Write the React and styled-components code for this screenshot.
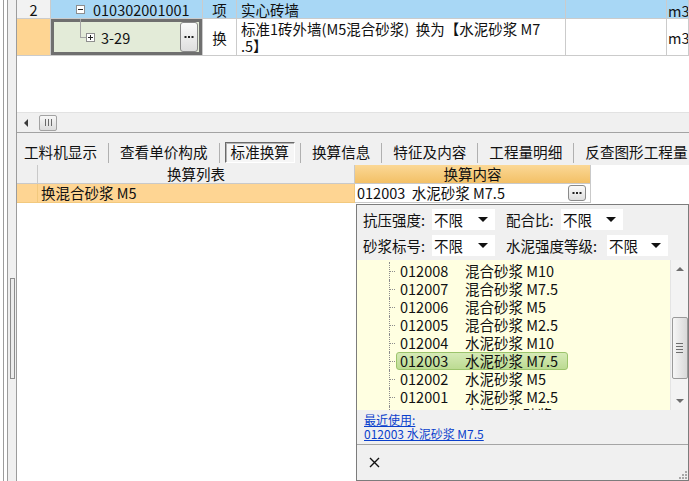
import React from 'react';
import styled, { createGlobalStyle } from 'styled-components';

const GlobalStyle = createGlobalStyle`
  html, body {
    margin: 0;
    padding: 0;
    background: #fff;
  }
  body {
    font-family: "Noto Sans CJK SC", "Liberation Sans", sans-serif;
    font-size: 14.5px;
    color: #111;
    overflow: hidden;
  }
`;

const Screen = styled.div`
  position: relative;
  width: 689px;
  height: 481px;
  display: flex;
  overflow: hidden;
  background: #fff;
`;

const Gutter = styled.div`
  width: 16px;
  flex: none;
  display: flex;
  flex-direction: column;
  padding-top: 278px;
  box-sizing: border-box;
  background: linear-gradient(
    to right,
    #fff 0 3px,
    #9c9c9c 3px 4px,
    #fff 4px 7px,
    #9c9c9c 7px 8px,
    #f0f0f0 8px 16px
  );
`;

const SplitGrip = styled.div`
  width: 5px;
  height: 101px;
  margin-left: 10px;
  box-sizing: border-box;
  border: 1px solid #8c8c8c;
  background: #ececec;
`;

const Main = styled.div`
  flex: 1;
  min-width: 0;
  display: flex;
  flex-direction: column;
  border-left: 1px solid #9c9c9c;
  background: #f0f0f0;
`;

/* ---------- top grid ---------- */

const TopGrid = styled.div`
  height: 133px;
  flex: none;
  box-sizing: border-box;
  display: flex;
  flex-direction: column;
  background: #fff;
  border-bottom: 1px solid #a3a3a3;
`;

const Row = styled.div`
  display: grid;
  grid-template-columns: 34px 152px 34px 329px 101px 1fr;
  height: ${(p) => p.$h}px;
  flex: none;
`;

const Cell = styled.div`
  box-sizing: border-box;
  border-right: 1px solid #cbcbcb;
  border-bottom: 1px solid #cbcbcb;
  background: ${(p) => p.$bg || '#fff'};
  display: flex;
  align-items: ${(p) => (p.$top ? 'flex-start' : 'center')};
  justify-content: ${(p) => (p.$center ? 'center' : 'flex-start')};
  padding-left: ${(p) => p.$pl || 0}px;
  padding-top: ${(p) => p.$pt || 0}px;
  line-height: 17px;
  white-space: pre;
  overflow: hidden;
  min-width: 0;
`;

const EditCell = styled(Cell)`
  background: #e3ebd8;
  box-shadow: inset 0 0 0 3px #6f6f6f;
  align-items: center;
`;

const TreeBox = styled.span`
  width: 9px;
  height: 9px;
  flex: none;
  box-sizing: border-box;
  border: 1px solid #8e8e8e;
  background: #fff;
  margin-right: ${(p) => p.$gap}px;
  position: relative;
  display: flex;
  align-items: center;
  justify-content: center;

  &::before,
  &::after {
    content: '';
    position: absolute;
    background: #222;
  }
  &::before {
    width: 5px;
    height: 1px;
  }
  &::after {
    width: 1px;
    height: 5px;
    display: ${(p) => (p.$plus ? 'block' : 'none')};
  }
`;

const Elbow = styled.span`
  width: 6px;
  height: 19px;
  flex: none;
  align-self: flex-start;
  margin-left: 29px;
  box-sizing: border-box;
  border-left: 1px solid #a4a4a4;
  border-bottom: 1px solid #a4a4a4;
`;

const DotsButton = styled.span`
  margin-left: auto;
  margin-right: 4px;
  width: 18px;
  height: ${(p) => p.$h}px;
  flex: none;
  box-sizing: border-box;
  border: 1px solid #8a8a8a;
  border-radius: 3px;
  background: linear-gradient(#fbfbfb, #dedede);
  display: flex;
  align-items: center;
  justify-content: center;
`;

const Dots = () => (
  <svg width="10" height="4" viewBox="0 0 10 4">
    <rect x="0.5" y="1" width="2" height="2" fill="#222" />
    <rect x="4" y="1" width="2" height="2" fill="#222" />
    <rect x="7.5" y="1" width="2" height="2" fill="#222" />
  </svg>
);

const GridFill = styled.div`
  flex: 1;
`;

const HScroll = styled.div`
  height: 20px;
  flex: none;
  background: #f0f0f0;
  border-top: 1px solid #e2e2e2;
  box-sizing: border-box;
  display: flex;
  align-items: center;
  padding-left: 7px;
`;

const LeftArrow = styled.span`
  width: 0;
  height: 0;
  border-top: 4px solid transparent;
  border-bottom: 4px solid transparent;
  border-right: 4px solid #3a3a3a;
  margin-right: 11px;
`;

const HThumb = styled.span`
  width: 18px;
  height: 16px;
  box-sizing: border-box;
  border: 1px solid #a2a2a2;
  border-radius: 2px;
  background: linear-gradient(#f7f7f7, #dcdcdc);
  display: flex;
  align-items: center;
  justify-content: center;
  gap: 2px;

  i {
    width: 1px;
    height: 7px;
    background: #6a6a6a;
  }
`;

/* ---------- tabs ---------- */

const TabsBar = styled.div`
  height: 32px;
  flex: none;
  box-sizing: border-box;
  padding: 9px 0 2px 1px;
  display: flex;
  align-items: center;
  white-space: nowrap;
  overflow: hidden;
  font-size: 14.6px;
`;

const Tab = styled.span`
  height: 21px;
  box-sizing: border-box;
  padding: 0 5px;
  line-height: 18px;
  border: 1px solid transparent;
  flex: none;
  ${(p) =>
    p.$active &&
    `
    border-color: #6a6a6a #fff #fff #6a6a6a;
    box-shadow: inset 1px 1px 0 #b4b4b4;
    background: #f6f6f6;
  `}
`;

const TabSep = styled.span`
  width: 1px;
  height: 20px;
  flex: none;
  margin: 0 5px;
  background: #b0b0b0;
`;

/* ---------- lower grid ---------- */

const LowerGrid = styled.div`
  flex: 1;
  background: #fff;
  display: flex;
  flex-direction: column;
`;

const LowRow = styled.div`
  display: grid;
  grid-template-columns: 21px 317px 236px 1fr;
  height: 19px;
  flex: none;
`;

const HeadCell = styled.div`
  box-sizing: border-box;
  border-right: 1px solid #c9c9c9;
  border-bottom: 1px solid #c9c9c9;
  background: ${(p) => (p.$hot ? 'linear-gradient(#fbd896, #f3c066)' : '#f0f0f0')};
  text-align: center;
  line-height: 18px;
`;

const DataCell = styled.div`
  box-sizing: border-box;
  border-right: 1px solid ${(p) => (p.$orange ? '#f2c97e' : '#c9c9c9')};
  border-bottom: 1px solid ${(p) => (p.$orange ? '#f2c97e' : '#c9c9c9')};
  background: ${(p) => (p.$orange ? '#fed593' : '#fff')};
  display: flex;
  align-items: center;
  padding-left: ${(p) => p.$pl || 0}px;
  line-height: 18px;
  white-space: pre;
`;

/* ---------- popup panel ---------- */

const Popup = styled.div`
  position: absolute;
  left: 356px;
  top: 204px;
  width: 333px;
  height: 277px;
  box-sizing: border-box;
  border: 1px solid #7c7c7c;
  background: #f0f0f0;
  display: flex;
  flex-direction: column;
`;

const Filters = styled.div`
  height: 55px;
  flex: none;
  box-sizing: border-box;
  padding: 4px 0 0 6px;
  display: flex;
  flex-direction: column;
  gap: 5px;
`;

const FilterRow = styled.div`
  display: flex;
  align-items: center;
  height: 21px;
`;

const FilterLabel = styled.span`
  width: ${(p) => p.$w}px;
  flex: none;
  white-space: nowrap;
`;

const Select = styled.span`
  width: ${(p) => p.$w}px;
  height: 21px;
  flex: none;
  box-sizing: border-box;
  background: #fff;
  display: flex;
  align-items: center;
  padding: 0 7px 0 2px;
  margin-right: 11px;
  line-height: 19px;

  &::after {
    content: '';
    margin-left: auto;
    border-left: 5px solid transparent;
    border-right: 5px solid transparent;
    border-top: 5px solid #111;
  }
`;

const ListArea = styled.div`
  height: 150px;
  flex: none;
  display: flex;
`;

const Items = styled.div`
  flex: 1;
  background: #ffffe1;
  overflow: hidden;
  padding-top: 2px;
`;

const TreeRow = styled.div`
  display: flex;
  align-items: center;
  height: 18px;
  padding-left: 32px;
  white-space: pre;
`;

const Connector = styled.span`
  width: 7px;
  height: 18px;
  flex: none;
  box-sizing: border-box;
  border-left: 1px dotted #8c8c8c;
  background-image: repeating-linear-gradient(to right, #8c8c8c 0 1px, transparent 1px 2px);
  background-size: 100% 1px;
  background-position: 0 9px;
  background-repeat: no-repeat;
`;

const ItemLabel = styled.span`
  display: flex;
  align-items: center;
  height: 18px;
  box-sizing: border-box;
  padding: 0 9px 0 3px;
  border: 1px solid ${(p) => (p.$selected ? '#9cc46c' : 'transparent')};
  border-radius: 3px;
  background: ${(p) => (p.$selected ? 'linear-gradient(#d6eab6, #bcdb92)' : 'transparent')};
  line-height: 16px;
`;

const Code = styled.span`
  width: 65px;
  flex: none;
`;

const VScroll = styled.div`
  width: 18px;
  flex: none;
  box-sizing: border-box;
  background: #f3f3f3;
  border-left: 1px solid #e4e4e4;
  display: flex;
  flex-direction: column;
  align-items: center;
`;

const ArrowBtn = styled.span`
  height: 18px;
  flex: none;
  display: flex;
  align-items: center;
  justify-content: center;

  &::before {
    content: '';
    border-left: 4px solid transparent;
    border-right: 4px solid transparent;
    ${(p) => (p.$down ? 'border-top' : 'border-bottom')}: 4px solid #6e6e6e;
  }
`;

const VThumb = styled.span`
  width: 16px;
  height: 62px;
  margin-top: 39px;
  box-sizing: border-box;
  border: 1px solid #9a9a9a;
  border-radius: 2px;
  background: linear-gradient(to right, #f6f6f6, #d9d9d9);
  display: flex;
  flex-direction: column;
  align-items: center;
  justify-content: center;
  gap: 2px;

  i {
    width: 7px;
    height: 1px;
    background: #6e6e6e;
  }
`;

const TrackFill = styled.span`
  flex: 1;
`;

const Recent = styled.div`
  height: 35px;
  flex: none;
  box-sizing: border-box;
  padding: 3px 7px 0;
  border-bottom: 1px solid #a5a5a5;
  font-size: 12px;
  line-height: 14px;
  display: flex;
  flex-direction: column;
  align-items: flex-start;
`;

const RecentLink = styled.a`
  color: #0a3fcc;
  text-decoration: underline;
  white-space: pre;
`;

const Footer = styled.div`
  flex: 1;
  display: flex;
  align-items: center;
  justify-content: space-between;
  padding-left: 12px;
`;

const Grip = styled.span`
  align-self: flex-end;
  display: flex;
  margin: 0 1px 1px 0;
`;

const tree = [
  ['012008', '混合砂浆 M10'],
  ['012007', '混合砂浆 M7.5'],
  ['012006', '混合砂浆 M5'],
  ['012005', '混合砂浆 M2.5'],
  ['012004', '水泥砂浆 M10'],
  ['012003', '水泥砂浆 M7.5', true],
  ['012002', '水泥砂浆 M5'],
  ['012001', '水泥砂浆 M2.5'],
  ['', '水泥石灰砂浆'],
];

const tabs = ['工料机显示', '查看单价构成', '标准换算', '换算信息', '特征及内容', '工程量明细', '反查图形工程量'];

const App = () => {
  return (
    <>
      <GlobalStyle />
      <Screen>
        <Gutter>
          <SplitGrip />
        </Gutter>
        <Main>
          <TopGrid>
            <Row $h={19}>
              <Cell $bg="#f2f2f2" $center>2</Cell>
              <Cell $bg="#a8d7f5" $pl={25}>
                <TreeBox $gap={8} />
                010302001001
              </Cell>
              <Cell $bg="#a8d7f5" $center>项</Cell>
              <Cell $bg="#a8d7f5" $pl={4}>实心砖墙</Cell>
              <Cell $bg="#a8d7f5" />
              <Cell $bg="#a8d7f5" $pl={1} $pt={3}>m3</Cell>
            </Row>
            <Row $h={37}>
              <Cell $bg="#fed593" />
              <EditCell>
                <Elbow />
                <TreeBox $plus $gap={6} />
                3-29
                <DotsButton $h={30}>
                  <Dots />
                </DotsButton>
              </EditCell>
              <Cell $center>换</Cell>
              <Cell $top $pl={4} $pt={1}>
                {'标准1砖外墙(M5混合砂浆)  换为【水泥砂浆 M7'}
                <br />
                {'.5】'}
              </Cell>
              <Cell />
              <Cell $pl={1}>m3</Cell>
            </Row>
            <GridFill />
            <HScroll>
              <LeftArrow />
              <HThumb>
                <i />
                <i />
                <i />
              </HThumb>
            </HScroll>
          </TopGrid>

          <TabsBar>
            {tabs.map((t, i) => (
              <React.Fragment key={t}>
                {i > 0 && <TabSep />}
                <Tab $active={t === '标准换算'}>{t}</Tab>
              </React.Fragment>
            ))}
          </TabsBar>

          <LowerGrid>
            <LowRow>
              <HeadCell />
              <HeadCell>换算列表</HeadCell>
              <HeadCell $hot>换算内容</HeadCell>
              <div />
            </LowRow>
            <LowRow>
              <DataCell $orange />
              <DataCell $orange $pl={3}>换混合砂浆 M5</DataCell>
              <DataCell $pl={2}>
                {'012003  水泥砂浆 M7.5'}
                <DotsButton $h={16}>
                  <Dots />
                </DotsButton>
              </DataCell>
              <div />
            </LowRow>
          </LowerGrid>
        </Main>

        <Popup>
          <Filters>
            <FilterRow>
              <FilterLabel $w={69}>抗压强度:</FilterLabel>
              <Select $w={63}>不限</Select>
              <FilterLabel $w={55}>配合比:</FilterLabel>
              <Select $w={62}>不限</Select>
            </FilterRow>
            <FilterRow>
              <FilterLabel $w={69}>砂浆标号:</FilterLabel>
              <Select $w={63}>不限</Select>
              <FilterLabel $w={101}>水泥强度等级:</FilterLabel>
              <Select $w={61}>不限</Select>
            </FilterRow>
          </Filters>

          <ListArea>
            <Items>
              {tree.map(([code, name, selected]) => (
                <TreeRow key={code + name}>
                  <Connector />
                  <ItemLabel $selected={selected}>
                    <Code>{code}</Code>
                    {name}
                  </ItemLabel>
                </TreeRow>
              ))}
            </Items>
            <VScroll>
              <ArrowBtn />
              <VThumb>
                <i />
                <i />
                <i />
                <i />
              </VThumb>
              <TrackFill />
              <ArrowBtn $down />
            </VScroll>
          </ListArea>

          <Recent>
            <RecentLink>最近使用:</RecentLink>
            <RecentLink>012003 水泥砂浆 M7.5</RecentLink>
          </Recent>

          <Footer>
            <svg width="11" height="11" viewBox="0 0 11 11">
              <path d="M1 1 L10 10 M10 1 L1 10" stroke="#111" strokeWidth="1.4" fill="none" />
            </svg>
            <Grip>
              <svg width="9" height="9" viewBox="0 0 9 9">
                <rect x="7" y="1" width="2" height="2" fill="#a8a8a8" />
                <rect x="4" y="4" width="2" height="2" fill="#a8a8a8" />
                <rect x="7" y="4" width="2" height="2" fill="#a8a8a8" />
                <rect x="1" y="7" width="2" height="2" fill="#a8a8a8" />
                <rect x="4" y="7" width="2" height="2" fill="#a8a8a8" />
                <rect x="7" y="7" width="2" height="2" fill="#a8a8a8" />
              </svg>
            </Grip>
          </Footer>
        </Popup>
      </Screen>
    </>
  );
};

export default App;
